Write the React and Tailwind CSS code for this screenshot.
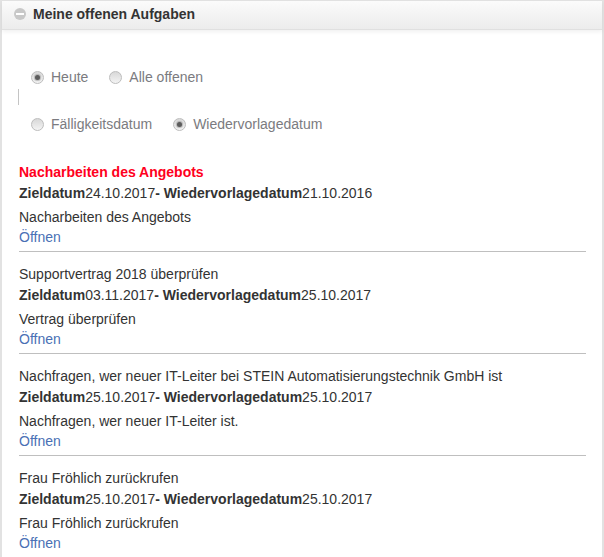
const tasks = [
  {
    title: "Nacharbeiten des Angebots",
    urgent: true,
    ziel: "24.10.2017",
    wieder: "21.10.2016",
    text: "Nacharbeiten des Angebots",
  },
  {
    title: "Supportvertrag 2018 überprüfen",
    ziel: "03.11.2017",
    wieder: "25.10.2017",
    text: "Vertrag überprüfen",
  },
  {
    title: "Nachfragen, wer neuer IT-Leiter bei STEIN Automatisierungstechnik GmbH ist",
    ziel: "25.10.2017",
    wieder: "25.10.2017",
    text: "Nachfragen, wer neuer IT-Leiter ist.",
  },
  {
    title: "Frau Fröhlich zurückrufen",
    ziel: "25.10.2017",
    wieder: "25.10.2017",
    text: "Frau Fröhlich zurückrufen",
  },
];

const Radio = ({ label, checked }) => (
  <label className="flex items-center">
    <span className="flex h-[13px] w-[13px] items-center justify-center rounded-full border border-[#bdbdbd] bg-gradient-to-b from-[#d8d8d8] to-[#f4f4f4]">
      {checked && <span className="h-[5px] w-[5px] rounded-full bg-[#5c5c5c] shadow-[0_0_1px_1px_rgba(90,90,90,0.35)]" />}
    </span>
    <span className="ml-[7px] text-[#7b7b80]">{label}</span>
  </label>
);

const Task = ({ task, last }) => (
  <div className={last ? "" : "border-b border-[#bfbfbf]"}>
    <div className={`pt-[12px] leading-5 ${task.urgent ? "font-bold text-[#ff0020]" : ""}`}>
      {task.title}
    </div>
    <div className="mt-[1px] leading-5">
      <b>Zieldatum</b>
      {task.ziel}
      <b>- Wiedervorlagedatum</b>
      {task.wieder}
    </div>
    <div className="mt-[4px] leading-5">{task.text}</div>
    <a href="#" className="block pb-[4px] leading-5 text-[#4a70b5]">
      Öffnen
    </a>
  </div>
);

export default function App() {
  return (
    <div className="h-[557px] w-[604px] overflow-hidden bg-white font-['Liberation_Sans',sans-serif] text-sm text-[#333333]">
      <div className="h-full border-x-2 border-t border-[#e2e2e2]">
        <div className="flex h-[29px] items-center border-b border-[#e0e0e0] bg-gradient-to-b from-[#fbfbfb] to-[#ececec] pb-[3px] pl-[12px] shadow-[0_2px_4px_rgba(0,0,0,0.06)]">
          <span className="flex h-[12px] w-[12px] items-center justify-center rounded-full bg-[#c8c8c8]">
            <span className="h-[2px] w-[8px] bg-white" />
          </span>
          <h2 className="ml-[7px] font-bold text-[#333333]">Meine offenen Aufgaben</h2>
        </div>

        <div className="pl-[17px] pr-[16px]">
          <div className="flex gap-[21px] pl-[12px] pt-[37px] leading-5">
            <Radio label="Heute" checked />
            <Radio label="Alle offenen" />
          </div>
          <div className="mt-[2px] h-[16px] w-px bg-[#c4c4c4] -ml-px" />
          <div className="mt-[9px] flex gap-[21px] pl-[12px] leading-5">
            <Radio label="Fälligkeitsdatum" />
            <Radio label="Wiedervorlagedatum" checked />
          </div>

          <div className="mt-[16px]">
            {tasks.map((task, i) => (
              <Task key={i} task={task} last={i === tasks.length - 1} />
            ))}
          </div>
        </div>
      </div>
    </div>
  );
}
